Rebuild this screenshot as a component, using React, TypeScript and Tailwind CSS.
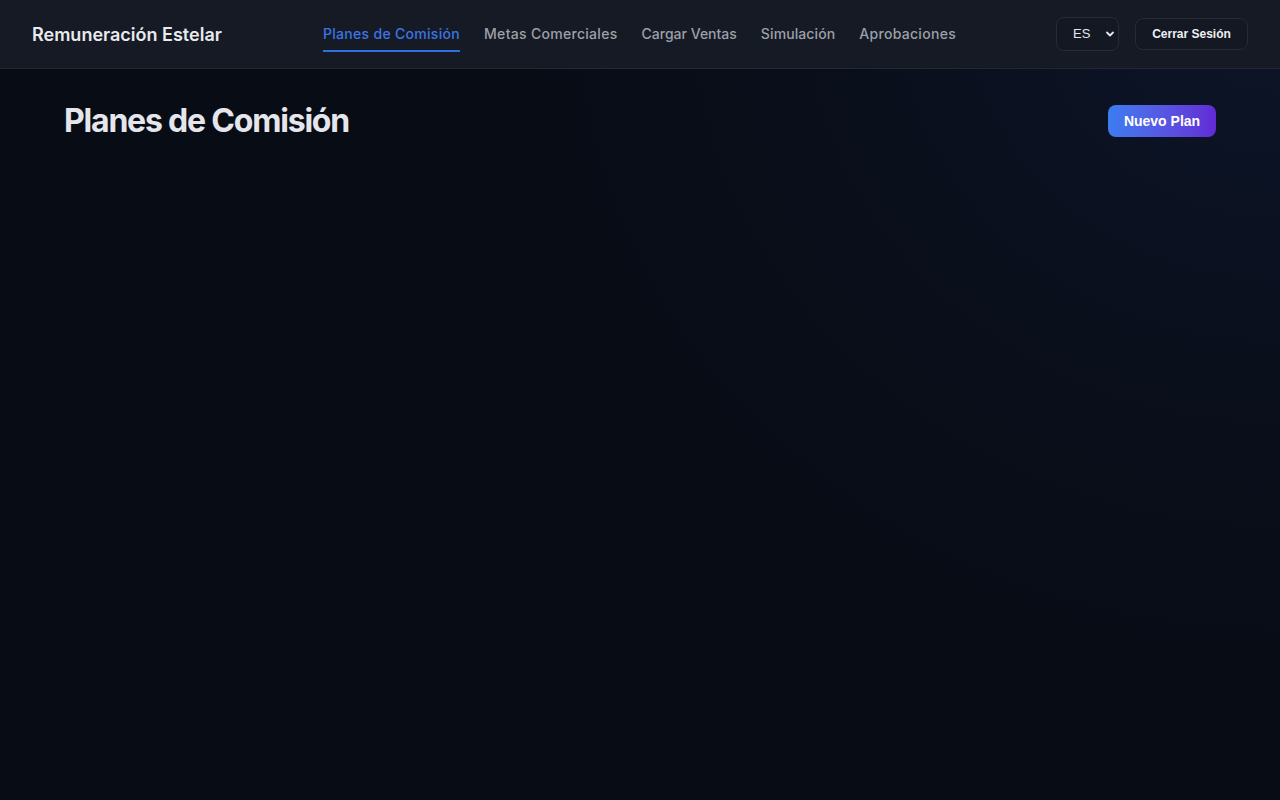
import React from "react";

const navItems = [
  { label: "Planes de Comisión", track: "tracking-[0.3px]" },
  { label: "Metas Comerciales", track: "tracking-[0.3px]" },
  { label: "Cargar Ventas", track: "tracking-[0px]" },
  { label: "Simulación", track: "tracking-[0.1px]" },
  { label: "Aprobaciones", track: "tracking-[0.3px]" },
];

export default function App() {
  return (
    <div
      className="min-h-[800px] w-full bg-[#080c15] bg-[radial-gradient(ellipse_760px_680px_at_100%_0%,#0d1529_0%,#0a0f1c_55%,#080c15_100%)] text-[#e5e7eb]"
      style={{ fontFamily: "Inter, 'Noto Sans', sans-serif" }}
    >
      <header className="flex h-[69px] items-center border-b border-[#232733] bg-[#161a24] px-8">
        <div className="w-[291px] text-[18px] font-semibold tracking-[0px] text-[#e8eaee]">
          Remuneración Estelar
        </div>
        <nav className="flex items-center gap-6">
          {navItems.map((item, i) => (
            <a
              key={item.label}
              className={
                (i === 0
                  ? "flex h-[36px] items-center border-b-2 border-[#2f6fe0] text-[14px] font-medium text-[#3b76e4] "
                  : "flex h-[36px] items-center border-b-2 border-transparent text-[14px] font-medium text-[#9ca0aa] ") +
                item.track
              }
            >
              {item.label}
            </a>
          ))}
        </nav>
        <div className="ml-auto flex items-center gap-4">
          <div className="flex h-[34px] w-[63px] items-center justify-between rounded-lg border border-[#272b37] bg-[#141822] pl-[16px] pr-[3px] text-[13px] text-[#e5e7eb]">
            <span style={{ fontFamily: "'Liberation Sans', Arial, sans-serif" }}>ES</span>
            <svg width="10" height="10" viewBox="0 0 10 10">
              <path d="M2 3.5 L5 6.5 L8 3.5" fill="none" stroke="#e5e7eb" strokeWidth="1.8" strokeLinecap="round" strokeLinejoin="round" />
            </svg>
          </div>
          <button
            className="flex h-[32px] w-[113px] items-center justify-center rounded-lg border border-[#272b37] bg-[#141822] text-[12px] font-bold text-[#eef0f3]"
            style={{ fontFamily: "'Liberation Sans', Arial, sans-serif" }}
          >
            Cerrar Sesión
          </button>
        </div>
      </header>
      <main className="px-16 pt-[28px]">
        <div className="flex items-center justify-between">
          <h1 className="text-[32px] font-bold tracking-[-1.2px] text-[#e4e6eb]">Planes de Comisión</h1>
          <button
            className="h-[32px] w-[108px] rounded-lg bg-gradient-to-r from-[#3b7cf0] to-[#6129d6] text-[14px] font-bold text-white"
            style={{ fontFamily: "'Liberation Sans', Arial, sans-serif" }}
          >
            Nuevo Plan
          </button>
        </div>
      </main>
    </div>
  );
}
